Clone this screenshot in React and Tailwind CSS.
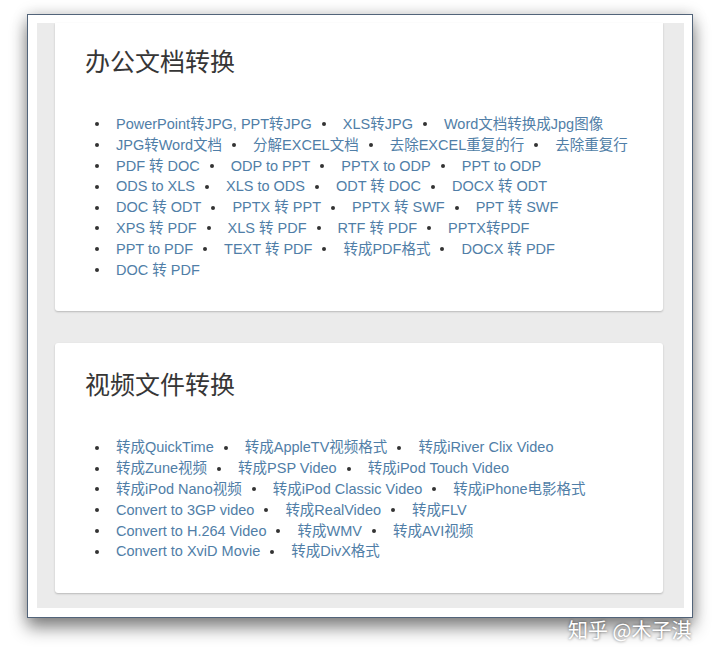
import React from "react";

const office = [
  ["PowerPoint转JPG, PPT转JPG", "XLS转JPG", "Word文档转换成Jpg图像"],
  ["JPG转Word文档", "分解EXCEL文档", "去除EXCEL重复的行", "去除重复行"],
  ["PDF 转 DOC", "ODP to PPT", "PPTX to ODP", "PPT to ODP"],
  ["ODS to XLS", "XLS to ODS", "ODT 转 DOC", "DOCX 转 ODT"],
  ["DOC 转 ODT", "PPTX 转 PPT", "PPTX 转 SWF", "PPT 转 SWF"],
  ["XPS 转 PDF", "XLS 转 PDF", "RTF 转 PDF", "PPTX转PDF"],
  ["PPT to PDF", "TEXT 转 PDF", "转成PDF格式", "DOCX 转 PDF"],
  ["DOC 转 PDF"],
];

const video = [
  ["转成QuickTime", "转成AppleTV视频格式", "转成iRiver Clix Video"],
  ["转成Zune视频", "转成PSP Video", "转成iPod Touch Video"],
  ["转成iPod Nano视频", "转成iPod Classic Video", "转成iPhone电影格式"],
  ["Convert to 3GP video", "转成RealVideo", "转成FLV"],
  ["Convert to H.264 Video", "转成WMV", "转成AVI视频"],
  ["Convert to XviD Movie", "转成DivX格式"],
];

function Row({ items }) {
  return (
    <div className="flex items-center h-[20.8px] whitespace-nowrap">
      {items.map((t, i) => (
        <div key={i} className="flex items-center mr-[10px]">
          <span className="w-[4px] h-[4px] rounded-full bg-[#333333] mr-[17px] shrink-0" />
          <a className="text-[#507ea7] text-[14.5px] leading-[20.8px]">{t}</a>
        </div>
      ))}
    </div>
  );
}

function Card({ title, rows, top }) {
  return (
    <div
      className={`bg-white rounded-b-[3px] shadow-[0_1px_2px_rgba(0,0,0,0.22)] pl-[30px] pr-[20px] pb-[31px] ${top}`}
    >
      <h2 className="text-[25px] leading-[30px] text-[#363636] font-normal">{title}</h2>
      <div className="mt-[37px] pl-[10px] flex flex-col">
        {rows.map((r, i) => (
          <Row key={i} items={r} />
        ))}
      </div>
    </div>
  );
}

export default function App() {
  return (
    <div className="relative w-[720px] h-[658px] bg-white overflow-hidden font-[family-name:'Liberation_Sans','Noto_Sans_CJK_SC',sans-serif]">
      <div className="pt-[14px] pl-[27px]">
        <div className="w-[666px] h-[604px] border border-[#52647a] bg-white pt-[8px] pl-[9px] pr-[8px] pb-[9px] shadow-[0_10px_16px_rgba(0,0,0,0.45),0_0_14px_rgba(0,0,0,0.18)]">
          <div className="h-full bg-[#ebebeb] pl-[18px] pr-[21px] flex flex-col">
            <Card title="办公文档转换" rows={office} top="pt-[24px]" />
            <div className="h-[32px] shrink-0" />
            <Card title="视频文件转换" rows={video} top="pt-[27px] rounded-t-[3px]" />
          </div>
        </div>
      </div>
      <div className="absolute left-[568px] top-[616px] text-[20px] leading-[28px] text-white font-[family-name:'Noto_Sans_CJK_SC',sans-serif] [text-shadow:0_0_3px_rgba(0,0,0,0.6)] whitespace-nowrap">
        知乎 @木子淇
      </div>
    </div>
  );
}
